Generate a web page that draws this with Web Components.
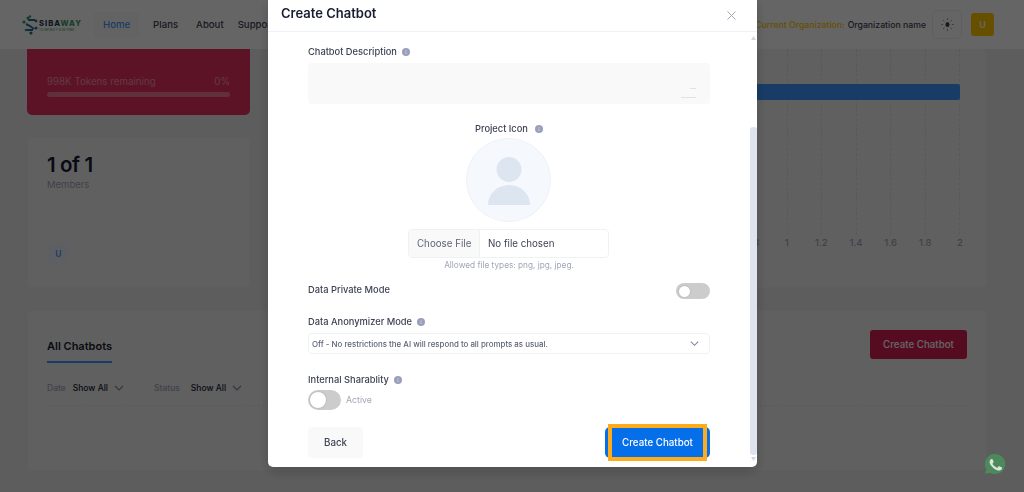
<!DOCTYPE html>
<html lang="en">
<head>
<meta charset="utf-8">
<title>Create Chatbot</title>
<style>
  html, body { margin: 0; height: 492px; overflow: hidden; background: #e8e8e8; font-family: Inter, "Liberation Sans", sans-serif; color: #181c32; }
</style>
</head>
<body>
<sb-page>
  <sb-header></sb-header>
  <sb-dashboard></sb-dashboard>
  <sb-modal heading="Create Chatbot">
    <sb-chatbot-form></sb-chatbot-form>
  </sb-modal>
  <sb-whatsapp></sb-whatsapp>
</sb-page>

<script>
const chevron = (size, color) => `<svg width="${size}" height="${size}" viewBox="0 0 12 12" fill="none" stroke="${color}" stroke-width="1.1"><path d="M2 4l4 4 4-4"/></svg>`;

class SbPage extends HTMLElement {
    constructor() {
        super();
        this.attachShadow({ mode: 'open' });
    }
    connectedCallback() {
        this.shadowRoot.innerHTML = `
            <style>
                :host { display: flex; flex-direction: column; width: 1024px; height: 492px; overflow: hidden; }
            </style>
            <slot></slot>
        `;
    }
}

class SbHeader extends HTMLElement {
    constructor() {
        super();
        this.attachShadow({ mode: 'open' });
    }
    connectedCallback() {
        this.shadowRoot.innerHTML = `
            <style>
                :host { display: flex; align-items: center; flex: none; height: 49px; padding: 0 30px 0 22px; background: #fcfcfc; box-sizing: border-box; font-size: 9.6px; font-weight: 500; color: #3f4254; }
                .logo { display: flex; align-items: center; width: 61px; margin-right: 11px; }
                .mark { flex: none; width: 17px; height: 20px; margin-right: 0; }
                .brand { display: flex; flex-direction: column; margin-top: 1px; }
                .word { font-size: 7.6px; font-weight: 800; letter-spacing: 1px; line-height: 9px; color: #2b3a55; white-space: nowrap; }
                .word b { color: #3f9a68; font-weight: 800; }
                .tag { font-size: 2.8px; line-height: 4px; color: #3f9a68; white-space: nowrap; letter-spacing: .2px; }
                nav { display: flex; align-items: center; }
                nav a { display: block; padding: 0 9px; height: 26px; line-height: 26px; white-space: nowrap; }
                nav a.on { background: #f7f7f7; color: #3e97ff; border-radius: 4px; margin-right: 5px; }
                nav a:nth-child(3) { margin-right: -4px; }
                .right { margin-left: auto; display: flex; align-items: center; font-size: 8.7px; white-space: nowrap; }
                .org { color: #ffc700; margin-right: 3px; }
                .theme { width: 30px; height: 29px; box-sizing: border-box; margin-left: 6px; border: 1px solid #eeeeee; border-radius: 5px; display: flex; align-items: center; justify-content: center; }
                .avatar { width: 23px; height: 23px; margin-left: 9px; border-radius: 3px; background: #ffc700; color: #fff; font-size: 9px; font-weight: 600; display: flex; align-items: center; justify-content: center; }
            </style>
            <div class="logo">
                <svg class="mark" viewBox="0 0 17 20" fill="none">
                    <path d="M6 5h7M4 9l4 2 4 3M11 15H4" stroke="#2b6f8f" stroke-width="2"/>
                    <circle cx="2" cy="7" r="1.6" fill="#2e9d6b"/><circle cx="6" cy="3" r="1.6" fill="#2e9d6b"/><circle cx="8" cy="1.5" r="1.2" fill="#2e9d6b"/>
                    <circle cx="14" cy="6" r="1.4" fill="#2b6f8f"/><circle cx="14" cy="13" r="1.6" fill="#2b6f8f"/><circle cx="9" cy="18" r="1.6" fill="#2b6f8f"/><circle cx="4" cy="15" r="1.3" fill="#2e9d6b"/>
                </svg>
                <div class="brand">
                    <span class="word">SIBA<b>WAY</b></span>
                    <span class="tag">TO INFINITY &amp; BEYOND</span>
                </div>
            </div>
            <nav>
                <a class="on">Home</a><a>Plans</a><a>About</a><a>Support</a>
            </nav>
            <div class="right">
                <span class="org">Current Organization:</span><span>Organization name</span>
                <div class="theme">
                    <svg width="15" height="15" viewBox="0 0 15 15" fill="none" stroke="#8a8d9c" stroke-width=".9" stroke-linecap="round">
                        <ellipse cx="7.5" cy="7.5" rx="2" ry="2.6" fill="#3f4254" stroke="none"/>
                        <path d="M7.5 1.500v1.200M7.500 12.300v1.200M1.500 7.500h1.200M12.300 7.500h1.200M3.300 3.300l.8.8M10.900 10.900l.8.8M3.300 11.700l.8-.8M10.900 4.100l.8-.8"/>
                    </svg>
                </div>
                <div class="avatar">U</div>
            </div>
        `;
    }
}

class SbDashboard extends HTMLElement {
    constructor() {
        super();
        this.attachShadow({ mode: 'open' });
    }
    connectedCallback() {
        const ticks = ['0.8', '1', '1.2', '1.4', '1.6', '1.8', '2'];
        this.shadowRoot.innerHTML = `
            <style>
                :host { display: grid; grid-template-columns: 223px 1fr; grid-template-rows: 66px 151px 161px; gap: 22px 20px; padding: 0 37px 0 27px; flex: none; }
                .card { background: #f0f0f0; border: 1px solid #ececec; border-radius: 5px; box-sizing: border-box; }
                .tokens { background: #e8305f; border: 0; border-radius: 0 0 5px 5px; padding: 27px 20px 0; color: #fff; font-size: 9.75px; }
                .row { display: flex; justify-content: space-between; opacity: .45; }
                .bar { height: 5px; margin-top: 5px; background: rgba(255,255,255,.35); border-radius: 3px; }
                .members { padding: 16px 19px; display: flex; flex-direction: column; }
                .big { font-size: 20.5px; font-weight: 600; line-height: 22px; letter-spacing: -.4px; }
                .sub { font-size: 9.5px; color: #a1a5b7; margin-top: 3px; }
                .u { margin-top: auto; margin-bottom: 6px; width: 23px; height: 23px; border-radius: 50%; background: #e8edf4; color: #3e97ff; font-size: 8.5px; font-weight: 600; display: flex; align-items: center; justify-content: center; }
                .chart { grid-row: 1 / 3; grid-column: 2; display: flex; flex-direction: column; align-items: flex-end; padding-right: 26px; border-top: 0; }
                .plot { width: 208px; height: 186px; display: flex; justify-content: space-between; position: relative; }
                .plot i { width: 0; height: 100%; border-left: 1px dashed #dcdee8; }
                .plotbar { position: absolute; top: 35px; left: 0; right: 0; height: 16px; background: #3e97ff; border-radius: 2px; }
                .ticks { width: 208px; display: flex; justify-content: space-between; font-size: 9.5px; font-weight: 500; color: #a1a5b7; margin-top: 2px; }
                .ticks span { width: 0; display: flex; justify-content: center; white-space: nowrap; }
                .bots { grid-column: 1 / 3; padding: 19px 19px 0; display: flex; flex-direction: column; }
                .top { display: flex; justify-content: space-between; align-items: flex-start; }
                .tab { font-size: 11px; font-weight: 600; padding: 9px 0 8px; border-bottom: 2px solid #3e97ff; white-space: nowrap; }
                .btn { background: #d81e50; color: #fff; font-size: 9.75px; font-weight: 500; width: 97px; height: 29px; border-radius: 3px; display: flex; align-items: center; justify-content: center; }
                .filters { display: flex; align-items: center; font-size: 8.5px; font-weight: 500; margin-top: 19px; height: 12px; }
                .filters em { font-style: normal; color: #a1a5b7; margin-right: 7px; }
                .filters em.wide { margin-right: 11px; }
                .filters svg { margin: 0 29px 0 5px; }
                .dash { border-top: 1px dashed #e2e2e6; margin-top: 11px; }
            </style>
            <div class="card tokens">
                <div class="row"><span>998K Tokens remaining</span><span>0%</span></div>
                <div class="bar"></div>
            </div>
            <div class="card members">
                <div class="big">1 of 1</div>
                <div class="sub">Members</div>
                <div class="u">U</div>
            </div>
            <div class="card chart">
                <div class="plot">
                    ${ticks.map(() => '<i></i>').join('')}
                    <div class="plotbar"></div>
                </div>
                <div class="ticks">${ticks.map(t => `<span>${t}</span>`).join('')}</div>
            </div>
            <div class="card bots">
                <div class="top">
                    <div class="tab">All Chatbots</div>
                    <div class="btn">Create Chatbot</div>
                </div>
                <div class="filters">
                    <em>Date</em><span>Show All</span>${chevron(12, '#7e8299')}
                    <em class="wide">Status</em><span>Show All</span>${chevron(12, '#7e8299')}
                </div>
                <div class="dash"></div>
            </div>
        `;
    }
}

// sits above the backdrop, so the dimmed colours are set directly
class SbWhatsapp extends HTMLElement {
    constructor() {
        super();
        this.attachShadow({ mode: 'open' });
    }
    connectedCallback() {
        this.shadowRoot.innerHTML = `
            <style>
                :host { position: fixed; left: 984px; top: 453px; width: 22px; height: 22px; display: block; }
            </style>
            <svg width="22" height="22" viewBox="0 0 24 24">
                <path fill="#4c8a5c" d="M12 1a11 11 0 0 0-9.4 16.6L1 23l5.600-1.500A11 11 0 1 0 12 1z"/>
                <path fill="#dbe5dd" d="M8.300 6.600c-.3 0-.7.1-1 .5-.4.5-1.200 1.300-1.200 2.900s1.200 3.200 1.400 3.400c.2.200 2.300 3.600 5.700 4.900 2.800 1.100 3.400.9 4 .8.600-.1 2-.8 2.300-1.600.3-.8.3-1.500.2-1.600-.1-.2-.3-.2-.7-.4l-2.300-1.100c-.3-.1-.5-.2-.8.200l-1.100 1.300c-.2.200-.4.300-.7.100-.4-.2-1.500-.5-2.800-1.700-1-.9-1.700-2-1.900-2.400-.2-.3 0-.5.200-.7l.5-.6c.2-.2.200-.4.300-.6.100-.2.100-.5 0-.6L9.400 7.200c-.3-.6-.6-.6-1.100-.6z"/>
            </svg>
        `;
    }
}

class SbModal extends HTMLElement {
    constructor() {
        super();
        this.attachShadow({ mode: 'open' });
    }
    connectedCallback() {
        const heading = this.getAttribute('heading');
        this.shadowRoot.innerHTML = `
            <style>
                :host { position: fixed; inset: 0; display: block; background: rgba(0,0,0,.6); }
                .dialog { width: 489px; height: 467px; margin-left: 268px; background: #fff; border-radius: 0 0 5px 5px; display: flex; flex-direction: column; overflow: hidden; box-shadow: 0 4px 12px rgba(0,0,0,.2); }
                header { flex: none; height: 32px; box-sizing: border-box; border-bottom: 1px solid #eff2f5; display: flex; justify-content: space-between; padding: 5px 20px 0 13px; }
                h2 { margin: 0; font-size: 13px; line-height: 16px; font-weight: 600; color: #181c32; }
                header svg { margin-top: 5px; }
                .scroll { flex: 1; min-height: 0; display: flex; }
                .content { flex: 1; padding: 13px 40px 0; min-width: 0; }
                .track { flex: none; width: 7px; display: flex; flex-direction: column; align-items: center; }
                .track svg { flex: none; }
                .up { margin-top: 4px; }
                .thumb { flex: none; width: 100%; margin-top: 87px; height: 328px; background: #dfe3ef; border-radius: 3px; }
                .down { margin-top: 2px; }
            </style>
            <div class="dialog" role="dialog">
                <header>
                    <h2>${heading}</h2>
                    <svg width="11" height="11" viewBox="0 0 11 11" stroke="#a1a5b7" stroke-width="1"><path d="M1.500 1.500l8 8M9.500 1.500l-8 8"/></svg>
                </header>
                <div class="scroll">
                    <div class="content"><slot></slot></div>
                    <div class="track">
                        <svg class="up" width="5" height="4" viewBox="0 0 5 4"><path d="M2.500 0L5 4H0z" fill="#d4d6de"/></svg>
                        <div class="thumb"></div>
                        <svg class="down" width="5" height="4" viewBox="0 0 5 4"><path d="M0 0h5L2.500 4z" fill="#d4d6de"/></svg>
                    </div>
                </div>
            </div>
        `;
    }
}

class SbInfo extends HTMLElement {
    constructor() {
        super();
        this.attachShadow({ mode: 'open' });
    }
    connectedCallback() {
        this.shadowRoot.innerHTML = `
            <style>
                :host { display: inline-flex; margin-left: 5px; vertical-align: middle; }
            </style>
            <svg width="8" height="8" viewBox="0 0 8 8"><circle cx="4" cy="4" r="4" fill="#9aa0bb"/><path d="M4 3.500v2.500M4 2v.8" stroke="#dfe1ea" stroke-width=".7"/></svg>
        `;
    }
}

class SbToggle extends HTMLElement {
    constructor() {
        super();
        this.attachShadow({ mode: 'open' });
    }
    connectedCallback() {
        const w = this.getAttribute('width');
        const h = this.getAttribute('height');
        const knob = this.getAttribute('knob');
        const inset = (h - knob) / 2;
        this.shadowRoot.innerHTML = `
            <style>
                :host { display: block; flex: none; width: ${w}px; height: ${h}px; border-radius: ${h / 2}px; background: #cccccc; padding: ${inset}px; box-sizing: border-box; }
                div { width: ${knob}px; height: ${knob}px; border-radius: 50%; background: #fff; box-shadow: 0 0 2px rgba(0,0,0,.2); }
            </style>
            <div></div>
        `;
    }
}

class SbChatbotForm extends HTMLElement {
    constructor() {
        super();
        this.attachShadow({ mode: 'open' });
    }
    connectedCallback() {
        this.shadowRoot.innerHTML = `
            <style>
                :host { display: block; font-size: 9.3px; font-weight: 500; color: #3f4254; }
                .label { height: 12px; box-sizing: border-box; padding-top: 1px; line-height: 11px; display: flex; align-items: center; white-space: nowrap; }
                .area { height: 41px; margin-top: 6px; background: #f9f9f9; border-radius: 4px; position: relative; }
                .area svg { position: absolute; right: 13px; bottom: 6px; }
                .center { justify-content: center; margin-top: 18px; }
                .center sb-info { margin-left: 7px; }
                .photo { width: 85px; height: 84px; margin: 4px 0 0 158px; box-sizing: border-box; border-radius: 50%; background: #f5f8fc; border: 1px solid #eef1f7; display: flex; align-items: center; justify-content: center; }
                .photo svg { margin-top: 2px; }
                .file { width: 201px; height: 29px; margin: 7px 0 0 100px; box-sizing: border-box; border: 1px solid #eff2f5; border-radius: 4px; display: flex; align-items: center; overflow: hidden; font-size: 9.75px; font-weight: 400; }
                .file b { font-weight: 400; background: #f9f9f9; width: 71px; height: 100%; box-sizing: border-box; padding-left: 8px; line-height: 27px; border-right: 1px solid #eff2f5; color: #5e6278; margin-right: 8px; white-space: nowrap; }
                .hint { margin-top: 2px; height: 10px; line-height: 10px; text-align: center; font-size: 8.25px; font-weight: 400; color: #a1a5b7; }
                .between { display: flex; justify-content: space-between; margin-top: 13px; }
                .mt16 { margin-top: 16px; }
                .select { height: 21px; margin-top: 6px; box-sizing: border-box; border: 1px solid #eff2f5; border-radius: 4px; display: flex; align-items: center; justify-content: space-between; padding: 0 9px 0 3px; font-size: 7.9px; color: #5e6278; white-space: nowrap; }
                .mt19 { margin-top: 19px; }
                .share { display: flex; align-items: center; margin-top: 5px; }
                .share span { margin-left: 5px; font-size: 8.75px; font-weight: 400; color: #a1a5b7; }
                footer { display: flex; justify-content: space-between; margin-top: 17px; font-size: 9.75px; }
                .back { width: 55px; height: 31px; background: #f9f9f9; border-radius: 4px; display: flex; align-items: center; justify-content: center; }
                .go { width: 105px; height: 31px; background: #056ee9; border-radius: 5px; display: flex; align-items: center; justify-content: center; }
                .go span { width: 91px; height: 29px; display: flex; align-items: center; justify-content: center; color: #fff; outline: 4px solid #ffac1c; background: #056ee9; white-space: nowrap; }
            </style>
            <div class="label">Chatbot Description<sb-info></sb-info></div>
            <div class="area">
                <svg width="16" height="10" viewBox="0 0 16 10" stroke="#e2e2e2" stroke-width="1"><path d="M0 9.500h15M9 .5h6"/></svg>
            </div>
            <div class="label center">Project Icon<sb-info></sb-info></div>
            <div class="photo">
                <svg width="42" height="48" viewBox="0 0 42 48" fill="#dde5f1"><circle cx="21" cy="12.500" r="12.500"/><path d="M0 48a21 20 0 0 1 42 0z"/></svg>
            </div>
            <div class="file"><b>Choose File</b><span>No file chosen</span></div>
            <div class="hint">Allowed file types: png, jpg, jpeg.</div>
            <div class="between">
                <div class="label">Data Private Mode</div>
                <sb-toggle width="34" height="16" knob="11"></sb-toggle>
            </div>
            <div class="label mt16">Data Anonymizer Mode<sb-info></sb-info></div>
            <div class="select">
                <span>Off - No restrictions the AI will respond to all prompts as usual.</span>
                ${chevron(11, '#7e8299')}
            </div>
            <div class="label mt19">Internal Sharablity<sb-info></sb-info></div>
            <div class="share">
                <sb-toggle width="33" height="20" knob="16"></sb-toggle>
                <span>Active</span>
            </div>
            <footer>
                <div class="back">Back</div>
                <div class="go"><span>Create Chatbot</span></div>
            </footer>
        `;
    }
}

customElements.define('sb-page', SbPage);
customElements.define('sb-header', SbHeader);
customElements.define('sb-dashboard', SbDashboard);
customElements.define('sb-whatsapp', SbWhatsapp);
customElements.define('sb-modal', SbModal);
customElements.define('sb-info', SbInfo);
customElements.define('sb-toggle', SbToggle);
customElements.define('sb-chatbot-form', SbChatbotForm);
</script>
</body>
</html>
